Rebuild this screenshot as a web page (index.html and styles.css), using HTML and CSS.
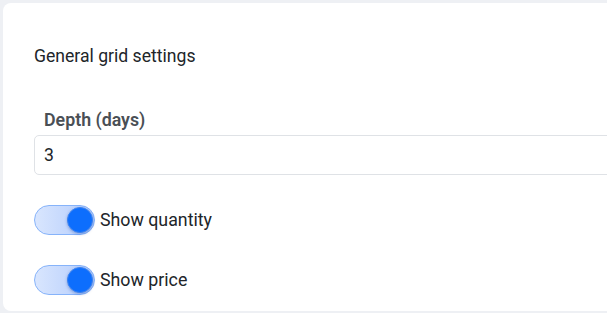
FILE: index.html
```html
<!DOCTYPE html>
<html lang="en">
<head>
    <meta charset="UTF-8">
    <meta name="viewport" content="width=device-width, initial-scale=1.0">
    <title>Grid settings</title>
    <link rel="stylesheet" href="styles.css">
</head>
<body>
    <div class="card">
        <h2 class="card-title">General grid settings</h2>

        <div class="field">
            <label for="depth">Depth (days)</label>
            <input type="text" id="depth" class="input" value="3">
        </div>

        <label class="switch-row">
            <span class="switch on"><span class="knob"></span></span>
            <span>Show quantity</span>
        </label>

        <label class="switch-row">
            <span class="switch on"><span class="knob"></span></span>
            <span>Show price</span>
        </label>
    </div>
</body>
</html>
```

FILE: styles.css
```css
body {
    margin: 0;
    padding: 3px 0 0 3px;
    background: #eef0f4;
    font-family: Roboto, "Noto Sans", sans-serif;
    color: #212529;
    overflow: hidden;
}
.card {
    background: #fff;
    border-radius: 8px 0 0 8px;
    height: 308px;
    box-sizing: border-box;
    padding: 43px 0 0 31px;
}
.card-title {
    margin: 0;
    font-size: 17.6px;
    font-weight: 400;
    line-height: 20px;
}
.field {
    margin-top: 44px;
    display: flex;
    flex-direction: column;
}
.field label {
    padding-left: 10px;
    font-size: 17.8px;
    font-weight: 600;
    line-height: 20px;
    color: #4a4f55;
}
.input {
    margin-top: 5px;
    height: 40px;
    box-sizing: border-box;
    width: calc(100% + 20px);
    border: 1px solid #dfe2e6;
    border-radius: 5px;
    padding: 0 9px;
    font-family: inherit;
    font-size: 17.6px;
    color: #212529;
    outline: none;
}
.switch-row {
    display: flex;
    align-items: center;
    margin-top: 30px;
    font-size: 17.8px;
    line-height: 30px;
    cursor: pointer;
}
.switch {
    position: relative;
    width: 61px;
    height: 30px;
    box-sizing: border-box;
    border-radius: 15px;
    border: 1px solid #86b3fa;
    background: linear-gradient(to right, #d9e6fe, #b2cbfc);
    margin-right: 5px;
    flex-shrink: 0;
}
.knob {
    position: absolute;
    top: 1px;
    right: 1px;
    width: 26px;
    height: 26px;
    border-radius: 50%;
    background: #0d6efd;
    border: 1px solid #3b82f0;
    box-sizing: border-box;
    box-shadow: 0 1px 3px rgba(13, 60, 160, 0.35);
}
```
